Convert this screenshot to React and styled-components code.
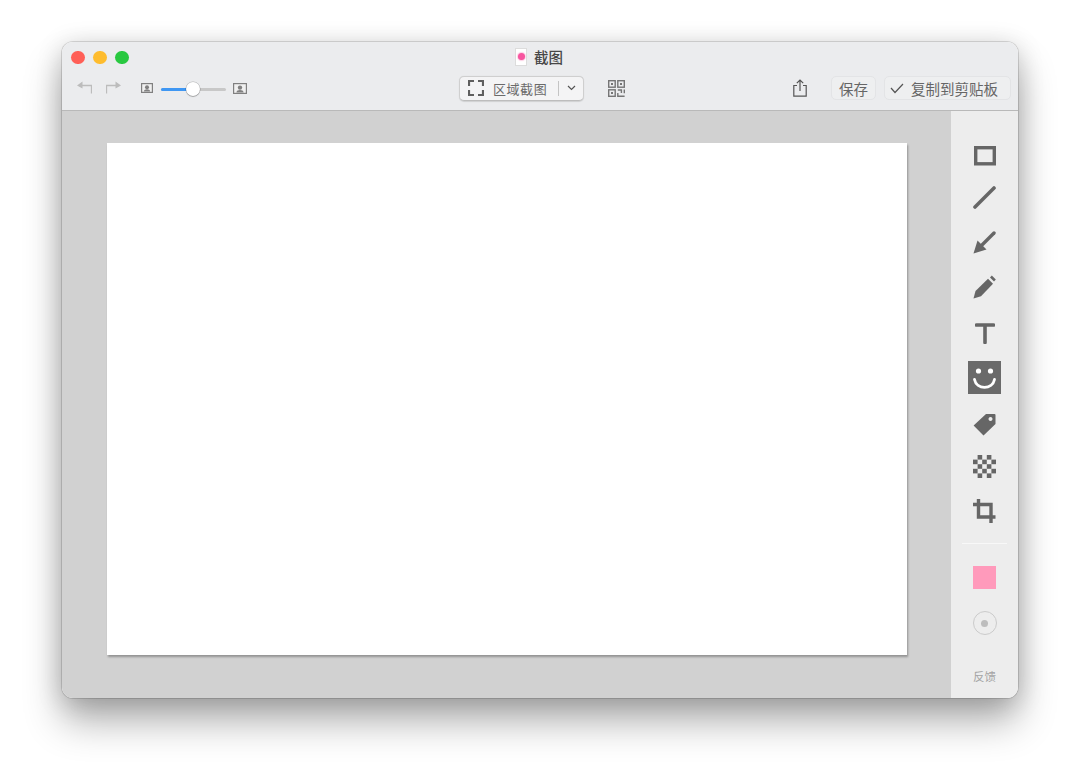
import React from "react";
import styled, { createGlobalStyle } from "styled-components";

const Global = createGlobalStyle`
  html, body { margin: 0; padding: 0; background: #fff; overflow: hidden; }
  body { font-family: "Noto Sans CJK SC", "Liberation Sans", sans-serif; }
`;
const Page = styled.div`
  width: 1080px; height: 781px; box-sizing: border-box;
  padding: 42px 62px 83px 62px; background: #fff;
`;
const Win = styled.div`
  width: 956px; height: 656px; border-radius: 11px; overflow: hidden;
  display: flex; flex-direction: column; box-sizing: border-box;
  box-shadow: 0 24px 38px rgba(0,0,0,.3), 0 4px 26px rgba(0,0,0,.18), 0 0 0 1px rgba(0,0,0,.13);
`;
const Header = styled.header`
  height: 69px; flex: none; background: #ebecee; border-bottom: 1px solid #b9b9b9;
  box-sizing: border-box; display: flex; flex-direction: column;
`;
const TitleRow = styled.div`
  height: 31px; padding: 0 11px 0 9px; display: grid; grid-template-columns: 1fr auto 1fr; align-items: center; flex: none;
`;
const Lights = styled.div`display: flex; gap: 8.5px;`;
const Light = styled.span`
  width: 13.5px; height: 13.5px; border-radius: 50%; background: ${p => p.$c};
`;
const Title = styled.div`
  display: flex; align-items: center; gap: 7px; margin-top: -2px;
  font-size: 14.5px; font-weight: 500; color: #474747; line-height: 18px;
`;
const DocIcon = styled.div`
  width: 12px; height: 18px; background: #fff; border: 1px solid #dcdcdc; box-sizing: border-box;
  display: flex; align-items: center; justify-content: center;
`;
const DocDot = styled.span`
  width: 7px; height: 7px; border-radius: 50% 50% 45% 45%; background: #f7559f; box-shadow: 0 0 1px 1px rgba(250,120,180,.35);
`;
const ToolRow = styled.div`
  flex: 1; display: flex; align-items: center; padding: 0 5px 7px 14px;
`;
const History = styled.div`display: flex; gap: 14px; margin: -2px 19px 0 0; color: #bcbcbc;`;
const Zoom = styled.div`display: flex; align-items: center; gap: 8px; width: 108px; margin-right: 210px;`;
const Track = styled.div`
  position: relative; width: 65px; height: 3.5px; border-radius: 2px; background: #c8c8c8; margin: 3px -1px 0 0;
`;
const Fill = styled.div`height: 100%; border-radius: 2px; background: #3f97f3;`;
const Knob = styled.div`
  position: absolute; top: -5.5px; width: 14px; height: 14px; border-radius: 50%; background: #fff;
  box-shadow: 0 0 0 .5px rgba(0,0,0,.25), 0 1px 1px rgba(0,0,0,.2);
`;
const ModeButton = styled.div`
  width: 125px; height: 25px; box-sizing: border-box; border-radius: 5px; background: #f4f4f5;
  border: 1px solid #cfcfcf; border-bottom-color: #bdbdbd; display: flex; align-items: center; padding-left: 8px;
  font-size: 13px; color: #6a6a6a; letter-spacing: .55px; box-shadow: 0 .5px 1px rgba(0,0,0,.12);
`;
const ModeLabel = styled.span`margin-left: 9px; width: 65px; white-space: nowrap;`;
const Sep = styled.span`width: 1px; height: 15px; background: #c4c4c4;`;
const Chevron = styled.span`margin-left: 8px; display: flex; color: #555;`;
const Qr = styled.div`margin-left: 24px; margin-right: 168px; display: flex; color: #757575;`;
const Share = styled.div`display: flex; margin-right: 24px; color: #555;`;
const Pill = styled.div`
  height: 24px; width: ${p => p.$w}px; box-sizing: border-box; border-radius: 5px; border: 1px solid #e3e4e6;
  background: #eeeff0; display: flex; align-items: center; font-size: 14.5px; color: #666; white-space: nowrap;
  padding-left: ${p => p.$pad}px; margin-right: ${p => p.$mr || 0}px; gap: 7px;
`;
const Body = styled.div`flex: 1; display: flex; min-height: 0;`;
const Canvas = styled.main`
  flex: 1; background: #d1d1d1; padding: 32px 0 0 45px;
`;
const Sheet = styled.div`
  width: 800px; height: 512px; background: #fff;
  box-shadow: 1px 2px 2px rgba(0,0,0,.3);
`;
const Side = styled.aside`
  width: 67px; flex: none; background: #ededed; display: flex; flex-direction: column; align-items: center; padding-top: 28.5px; box-sizing: border-box;
  color: #666;
`;
const Tool = styled.div`
  width: 33px; height: 33px; margin-top: ${p => p.$mt || 0}px; flex: none; display: flex; align-items: center; justify-content: center;
  background: ${p => p.$active ? "#6a6a6a" : "transparent"}; color: ${p => p.$active ? "#fff" : "#666"};
`;
const Divider = styled.div`width: 45px; height: 1px; background: #f8f8f8; margin-top: 15px;`;
const Swatch = styled.div`width: 23px; height: 23px; background: #ff9abb; margin-top: 22.5px; flex: none;`;
const Radio = styled.div`
  width: 24px; height: 24px; box-sizing: border-box; margin-top: 22px; border-radius: 50%; border: 1px solid #cbcbcb;
  display: flex; align-items: center; justify-content: center; flex: none;
`;
const RadioDot = styled.span`width: 7px; height: 7px; border-radius: 50%; background: #bdbdbd;`;
const Feedback = styled.div`font-size: 11.5px; color: #a4a4a4; margin-top: 33px; line-height: 16px;`;

const Svg = ({ w, h, children, ...r }) => <svg width={w} height={h} viewBox={`0 0 ${w} ${h}`} fill="none" {...r}>{children}</svg>;

const Undo = () => <Svg w={16} h={14}><path d="M15.5 13.5V5.5H3" stroke="currentColor" strokeWidth="1.3"/><path d="M6.5 1.5 1 5.5l5.5 3z" fill="currentColor"/></Svg>;
const Redo = () => <Svg w={16} h={14}><path d="M.5 13.5V5.5H13" stroke="currentColor" strokeWidth="1.3"/><path d="M9.5 1.5 15 5.5l-5.5 3z" fill="currentColor"/></Svg>;
const Photo = ({ w, h }) => (
  <Svg w={w} h={h} style={{ color: "#808080" }}>
    <rect x=".6" y=".6" width={w - 1.2} height={h - 1.2} stroke="currentColor" strokeWidth="1.2" fill="#f0f0f0"/>
    <circle cx={w / 2} cy={h * 0.42} r={h * 0.2} fill="currentColor"/>
    <path d={`M${w * 0.24} ${h - 1.5}c0-${h * 0.3} ${w * 0.52}-${h * 0.3} ${w * 0.52} 0z`} fill="currentColor"/>
  </Svg>
);
const Corners = () => <Svg w={16} h={16}><path d="M1 6V1h5M10 1h5v5M15 10v5h-5M6 15H1v-5" stroke="#5f5f5f" strokeWidth="2.2"/></Svg>;
const QrIcon = () => (
  <Svg w={17} h={17}>
    <g stroke="currentColor" strokeWidth="1.4">
      <rect x=".7" y=".7" width="6.5" height="6.5"/><rect x="9.8" y=".7" width="6.5" height="6.5"/><rect x=".7" y="9.8" width="6.5" height="6.5"/>
      <path d="M9.8 10h3.6v3M16.3 9.5v3.8M9.8 13v3.3h6.8"/>
    </g>
    <path d="M3 3h2v2H3zM12 3h2v2h-2zM3 12h2v2H3z" fill="currentColor"/>
  </Svg>
);
const ShareIcon = () => <Svg w={14} h={18}><path d="M4 6.5H.8v10.7h12.4V6.5H10" stroke="currentColor" strokeWidth="1.2"/><path d="M7 12V1.3M3.8 4.2 7 1l3.2 3.2" stroke="currentColor" strokeWidth="1.2"/></Svg>;

function Checker() {
  const cells = [];
  for (let r = 0; r < 5; r++) for (let c = 0; c < 5; c++) {
    if ((r + c) % 2 === 1) cells.push(<rect key={`${r}${c}`} x={c * 4.6} y={r * 4.6} width="4.6" height="4.6" fill="currentColor"/>);
  }
  return <Svg w={23} h={23}>{cells}</Svg>;
}

const icons = [
  <Svg w={22} h={20}><rect x="1.7" y="1.7" width="18.6" height="16.1" stroke="currentColor" strokeWidth="3.4"/></Svg>,
  <Svg w={23} h={23}><path d="M2 21 21 2" stroke="currentColor" strokeWidth="3.6" strokeLinecap="round"/></Svg>,
  <Svg w={23} h={23}><path d="M21 2 8 15" stroke="currentColor" strokeWidth="3.4" strokeLinecap="round"/><path d="M.5 22.5 4.5 9.5l9 9z" fill="currentColor"/></Svg>,
  <Svg w={23} h={24}><path d="M.5 23.5 2.5 16 15 3.8l5 5L8 21.3z" fill="currentColor"/><path d="m17 2.5 1.8-1.9 4 3.9L21 6.5z" fill="currentColor"/></Svg>,
  <Svg w={20} h={21}><path d="M1.5 2h17M10 2v17.5" stroke="currentColor" strokeWidth="3.6" strokeLinecap="round"/></Svg>,
  <Svg w={33} h={33}><circle cx="10.5" cy="10" r="2.6" fill="currentColor"/><circle cx="22.5" cy="10" r="2.6" fill="currentColor"/><path d="M6.5 18.5c2 10.5 18 10.5 20 0" stroke="currentColor" strokeWidth="2.8" strokeLinecap="round"/></Svg>,
  <Svg w={23} h={23}><path fillRule="evenodd" d="M13 1h8.5a1 1 0 0 1 1 1v9L10.5 22.5.6 12.5zM17.5 4a2 2 0 1 0 .01 0z" fill="currentColor"/></Svg>,
  <Checker />,
  <Svg w={23} h={24}><path d="M5.5 0v18h17M0 5.5h18V24" stroke="currentColor" strokeWidth="3.4"/></Svg>,
];
const mts = [0, 8.5, 12, 11, 13.5, 11.5, 13.5, 9.5, 11.5];

export default function App() {
  return (
    <Page>
      <Global />
      <Win>
        <Header>
          <TitleRow>
            <Lights>
              <Light $c="#ff5f57" /><Light $c="#febc2e" /><Light $c="#28c840" />
            </Lights>
            <Title><DocIcon><DocDot /></DocIcon>截图</Title>
            <span />
          </TitleRow>
          <ToolRow>
            <History><Undo /><Redo /></History>
            <Zoom>
              <Photo w={12} h={10} />
              <Track>
                <Fill style={{ width: "50%" }} />
                <Knob style={{ left: "25px" }} />
              </Track>
              <Photo w={14} h={11} />
            </Zoom>
            <ModeButton>
              <Corners />
              <ModeLabel>区域截图</ModeLabel>
              <Sep />
              <Chevron><Svg w={9} h={6}><path d="m1 1 3.5 3.5L8 1" stroke="currentColor" strokeWidth="1.2"/></Svg></Chevron>
            </ModeButton>
            <Qr><QrIcon /></Qr>
            <Share><ShareIcon /></Share>
            <Pill $w={45} $pad={7} $mr={8}>保存</Pill>
            <Pill $w={127} $pad={5}>
              <Svg w={14} h={11}><path d="m1 5 4 4.5L13 1" stroke="#555" strokeWidth="1.2"/></Svg>
              复制到剪贴板
            </Pill>
          </ToolRow>
        </Header>
        <Body>
          <Canvas><Sheet /></Canvas>
          <Side>
            {icons.map((ic, i) => <Tool key={i} $mt={mts[i]} $active={i === 5}>{ic}</Tool>)}
            <Divider />
            <Swatch />
            <Radio><RadioDot /></Radio>
            <Feedback>反馈</Feedback>
          </Side>
        </Body>
      </Win>
    </Page>
  );
}
